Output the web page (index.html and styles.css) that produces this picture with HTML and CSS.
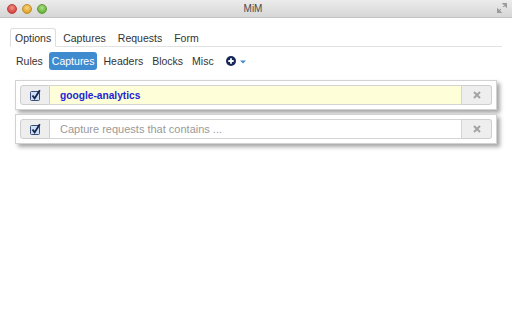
FILE: index.html
```html
<!DOCTYPE html>
<html>
<head>
<meta charset="utf-8">
<title>MiM</title>
<link rel="stylesheet" href="styles.css">
</head>
<body>
<div class="window">
  <header class="titlebar">
    <div class="lights">
      <span class="light red"></span>
      <span class="light yellow"></span>
      <span class="light green"></span>
    </div>
    <div class="title">MiM</div>
    <svg class="fullscreen" width="10" height="10" viewBox="0 0 10 10">
      <path d="M6 0.5 H9.5 V4 Z M9 1 L6.2 3.8" fill="#9c9c9c" stroke="#9c9c9c" stroke-width="1.2"/>
      <path d="M4 9.5 H0.5 V6 Z M1 9 L3.8 6.2" fill="#9c9c9c" stroke="#9c9c9c" stroke-width="1.2"/>
    </svg>
  </header>

  <main class="content">
    <ul class="tabs">
      <li><a class="tab active">Options</a></li>
      <li><a class="tab">Captures</a></li>
      <li><a class="tab">Requests</a></li>
      <li><a class="tab">Form</a></li>
    </ul>

    <ul class="pills">
      <li><a class="pill">Rules</a></li>
      <li><a class="pill active">Captures</a></li>
      <li><a class="pill">Headers</a></li>
      <li><a class="pill">Blocks</a></li>
      <li><a class="pill">Misc</a></li>
      <li class="add">
        <svg class="plus" width="10" height="10" viewBox="0 0 10 10">
          <circle cx="5" cy="5" r="5" fill="#16275a"/>
          <path d="M5 2.3 V7.7 M2.3 5 H7.7" stroke="#fff" stroke-width="1.8"/>
        </svg>
        <svg class="caret" width="6" height="4" viewBox="0 0 6 4">
          <path d="M0 0.5 H6 L3 3.5 Z" fill="#428bca"/>
        </svg>
      </li>
    </ul>

    <div class="rules">
      <div class="rule">
        <div class="group">
          <span class="addon check">
            <svg width="13" height="13" viewBox="0 0 13 13">
              <rect x="1.5" y="2.5" width="9" height="9" rx="1" fill="#cde0f6" stroke="#3c4c78"/>
              <path d="M3.5 6.5 L5.6 9.4 L10.8 1.2" fill="none" stroke="#14224e" stroke-width="1.8"/>
            </svg>
          </span>
          <span class="field filled">google-analytics</span>
          <span class="addon remove">
            <svg width="8" height="8" viewBox="0 0 8 8"><path d="M1 1 L7 7 M7 1 L1 7" stroke="#a3a3a3" stroke-width="2"/></svg>
          </span>
        </div>
      </div>
      <div class="rule">
        <div class="group">
          <span class="addon check">
            <svg width="13" height="13" viewBox="0 0 13 13">
              <rect x="1.5" y="2.5" width="9" height="9" rx="1" fill="#cde0f6" stroke="#3c4c78"/>
              <path d="M3.5 6.5 L5.6 9.4 L10.8 1.2" fill="none" stroke="#14224e" stroke-width="1.8"/>
            </svg>
          </span>
          <span class="field placeholder">Capture requests that contains ...</span>
          <span class="addon remove">
            <svg width="8" height="8" viewBox="0 0 8 8"><path d="M1 1 L7 7 M7 1 L1 7" stroke="#a3a3a3" stroke-width="2"/></svg>
          </span>
        </div>
      </div>
    </div>
  </main>
</div>
</body>
</html>
```

FILE: styles.css
```css
html, body {
  margin: 0;
  padding: 0;
  background: #fff;
}

body {
  font-family: "Liberation Sans", Arial, sans-serif;
  color: #333;
  width: 512px;
  height: 320px;
  overflow: hidden;
}

ul {
  list-style: none;
  margin: 0;
  padding: 0;
}

.titlebar {
  height: 17px;
  border-bottom: 1px solid #c4c4c4;
  background: linear-gradient(#ececec, #d6d6d6);
  display: flex;
  align-items: center;
  position: relative;
}

.lights {
  display: flex;
  gap: 5px;
  padding-left: 7px;
}

.light {
  width: 10px;
  height: 10px;
  border-radius: 50%;
  box-sizing: border-box;
}

.red {
  background: radial-gradient(circle at 50% 35%, #f3928c, #d7463f 70%);
  border: 1px solid #b8403a;
}

.yellow {
  background: radial-gradient(circle at 50% 35%, #f8d68a, #e0a528 70%);
  border: 1px solid #bf8c2a;
}

.green {
  background: radial-gradient(circle at 50% 35%, #b2e08c, #69b33a 70%);
  border: 1px solid #5b9a35;
}

.title {
  flex: 1;
  text-align: center;
  font-size: 10px;
  color: #4a4a4a;
  margin-right: 38px;
}

.fullscreen {
  margin-right: 5px;
  margin-top: -2px;
}

.content {
  padding: 10px 10px 0;
}

.tabs {
  display: flex;
  border-bottom: 1px solid #e2e2e2;
}

.tab {
  display: block;
  font-size: 10.5px;
  line-height: 12px;
  padding: 3px 4px 2px;
  margin-right: 2px;
  margin-bottom: -1px;
  border: 1px solid transparent;
  border-radius: 3px 3px 0 0;
  color: #333;
}

.tab.active {
  border-color: #dedede;
  border-bottom-color: #fff;
  background: #fff;
}

.pills {
  display: flex;
  align-items: center;
  margin-top: 5px;
  padding-left: 3px;
  gap: 3px;
}

.pill {
  display: block;
  font-size: 10.5px;
  line-height: 14px;
  padding: 2px 3px;
  border-radius: 3px;
  color: #333;
}

.pill.active {
  background: #3f8bd0;
  color: #fff;
}

.add {
  display: flex;
  align-items: center;
  padding-left: 6px;
  gap: 4px;
}

.plus {
  display: block;
}

.caret {
  display: block;
  margin-top: 1px;
}

.rules {
  margin: 10px 5px 0;
  display: flex;
  flex-direction: column;
  gap: 4px;
}

.rule {
  border: 1px solid #d2d2d2;
  background: #fff;
  padding: 4px;
  box-shadow: 3px 3px 4px rgba(0, 0, 0, 0.35);
}

.group {
  display: flex;
  height: 20px;
}

.addon {
  width: 30px;
  box-sizing: border-box;
  background: #eeeeee;
  border: 1px solid #cfcfcf;
  display: flex;
  align-items: center;
  justify-content: center;
}

.addon svg {
  display: block;
}

.check {
  border-radius: 3px 0 0 3px;
}

.remove {
  border-radius: 0 3px 3px 0;
  border-left: 0;
}

.field {
  flex: 1;
  box-sizing: border-box;
  border: 1px solid #d4d4d4;
  border-left: 0;
  padding-left: 10px;
  display: flex;
  align-items: center;
  font-size: 11px;
}

.field.filled {
  background: #fefed8;
  font-weight: bold;
  font-size: 10.2px;
  color: #2424d6;
}

.field.placeholder {
  color: #9a9a9a;
}
```
